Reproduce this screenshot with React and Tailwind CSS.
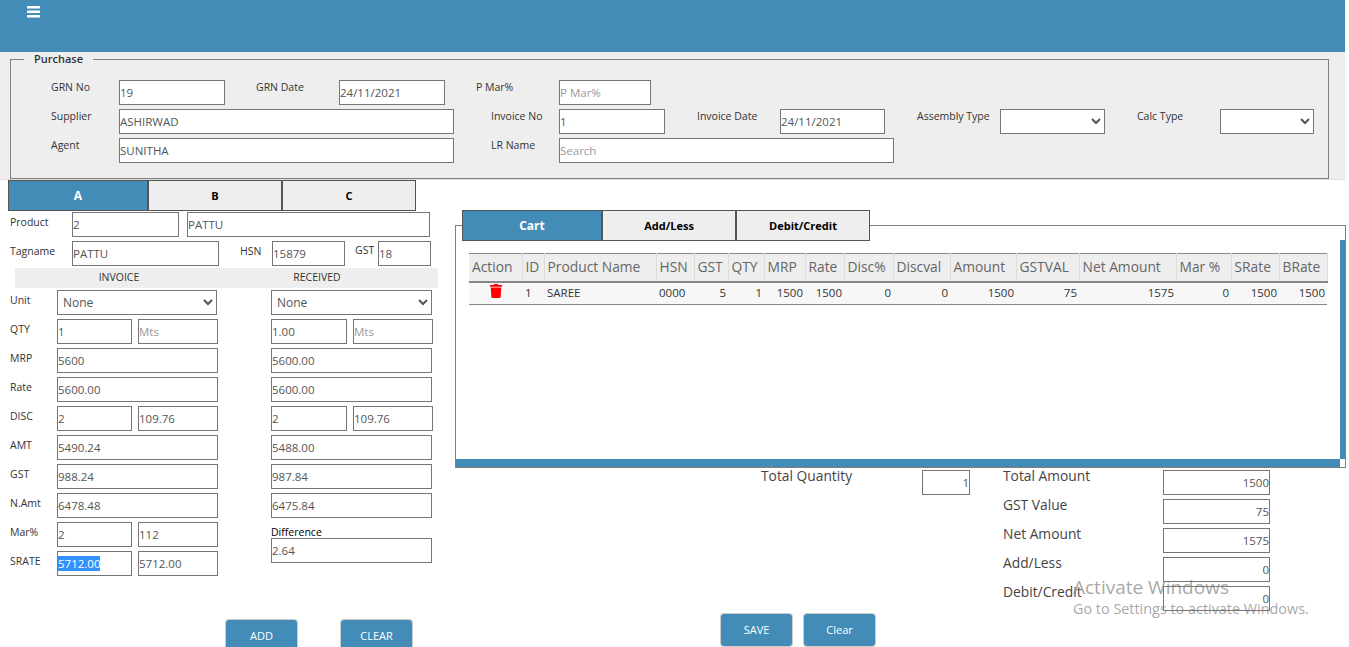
import React from "react";
import { FaTrash } from "react-icons/fa";

const fieldClass =
  "h-[25px] shrink-0 border border-[#767676] bg-white text-[11.5px] text-[#555] placeholder-[#999] outline-none";

const Field = ({ value, placeholder, className = "" }) => (
  <input readOnly defaultValue={value} placeholder={placeholder} className={`${fieldClass} ${className}`} />
);

const Picker = ({ value, className = "" }) => (
  <select defaultValue={value} className={`${fieldClass} ${className}`}>
    {value ? <option>{value}</option> : <option></option>}
  </select>
);

const Label = ({ children, className = "" }) => (
  <label className={`shrink-0 text-[10.5px] leading-[14px] text-[#333] ${className}`}>{children}</label>
);

const Tab = ({ children, active, className = "" }) => (
  <button
    className={`h-[31px] border border-[#555] font-bold ${
      active ? "bg-[#438cb8] text-[12px] text-white" : "bg-[#eee] pt-px text-[11px] text-black"
    } ${className}`}
  >
    {children}
  </button>
);

const ActionButton = ({ children }) => (
  <button className="h-[34px] w-[73px] rounded-[4px] border border-[#ccc] bg-[#438cb8] text-[11px] font-medium text-white">
    {children}
  </button>
);

const columns = [
  { name: "Action", width: "w-[53px]" },
  { name: "ID", width: "w-[22px]" },
  { name: "Product Name", width: "w-[112px]" },
  { name: "HSN", width: "w-[38px]" },
  { name: "GST", width: "w-[34px]" },
  { name: "QTY", width: "w-[36px]" },
  { name: "MRP", width: "w-[41px]" },
  { name: "Rate", width: "w-[39px]" },
  { name: "Disc%", width: "w-[49px]" },
  { name: "Discval", width: "w-[57px]" },
  { name: "Amount", width: "w-[66px]" },
  { name: "GSTVAL", width: "w-[63px]" },
  { name: "Net Amount", width: "w-[97px]" },
  { name: "Mar %", width: "w-[55px]" },
  { name: "SRate", width: "w-[48px]" },
  { name: "BRate", width: "w-[48px]" },
];

const cartValues = ["5", "1", "1500", "1500", "0", "0", "1500", "75", "1575", "0", "1500", "1500"];

const Row = ({ label, children }) => (
  <div className="flex h-[25px]">
    <Label className="w-[47px] pt-[3px]">{label}</Label>
    {children}
  </div>
);

const InvoiceColumn = () => (
  <div className="flex w-[261px] shrink-0 flex-col gap-[4px]">
    <Row label="Unit">
      <Picker value="None" className="w-[160px] pl-px text-[12px]" />
    </Row>
    <Row label="QTY">
      <Field value="1" className="w-[75px]" />
      <Field placeholder="Mts" className="ml-[6px] w-[80px]" />
    </Row>
    <Row label="MRP"><Field value="5600" className="w-[161px]" /></Row>
    <Row label="Rate"><Field value="5600.00" className="w-[161px]" /></Row>
    <Row label="DISC">
      <Field value="2" className="w-[75px]" />
      <Field value="109.76" className="ml-[6px] w-[80px]" />
    </Row>
    <Row label="AMT"><Field value="5490.24" className="w-[161px]" /></Row>
    <Row label="GST"><Field value="988.24" className="w-[161px]" /></Row>
    <Row label="N.Amt"><Field value="6478.48" className="w-[161px]" /></Row>
    <Row label="Mar%">
      <Field value="2" className="w-[75px]" />
      <Field value="112" className="ml-[6px] w-[80px]" />
    </Row>
    <Row label="SRATE">
      <div className={`${fieldClass} flex w-[75px] items-center leading-[15px]`}>
        <span className="bg-[#3390ff] text-white">5712.00</span>
      </div>
      <Field value="5712.00" className="ml-[6px] w-[80px]" />
    </Row>
  </div>
);

const ReceivedColumn = () => (
  <div className="flex flex-col gap-[4px]">
    <Picker value="None" className="w-[161px] pl-px text-[12px]" />
    <div className="flex">
      <Field value="1.00" className="w-[76px]" />
      <Field placeholder="Mts" className="ml-[6px] w-[80px]" />
    </div>
    <Field value="5600.00" className="w-[161px]" />
    <Field value="5600.00" className="w-[161px]" />
    <div className="flex">
      <Field value="2" className="w-[76px]" />
      <Field value="109.76" className="ml-[6px] w-[80px]" />
    </div>
    <Field value="5488.00" className="w-[161px]" />
    <Field value="987.84" className="w-[161px]" />
    <Field value="6475.84" className="w-[161px]" />
    <div className="flex flex-col pt-[3px]">
      <Label className="h-[13px] text-black">Difference</Label>
      <Field value="2.64" className="w-[161px]" />
    </div>
  </div>
);

const Total = ({ label, value }) => (
  <div className="flex h-[25px]">
    <span className="w-[160px] shrink-0 text-[13.8px] leading-[12px] text-[#444]">{label}</span>
    <Field value={value} className="w-[107px] text-right" />
  </div>
);

export default function App() {
  return (
    <div className="relative h-[647px] overflow-hidden bg-white font-['Open_Sans',sans-serif]">
      <header className="h-[52px] w-[1345px] bg-[#438cb8] pl-[27px] pt-[6px]">
        <svg width="13" height="12" viewBox="0 0 13 12" fill="#fff">
          <rect width="13" height="2.5" y="0" rx="0.5" />
          <rect width="13" height="2.5" y="4.5" rx="0.5" />
          <rect width="13" height="2.5" y="9" rx="0.5" />
        </svg>
      </header>

      {/* Purchase header */}
      <section className="h-[128px] w-[1345px] border-b border-[#ddd] bg-[#eee] pl-[10px]">
        <fieldset className="h-[127px] w-[1319px] border border-[#808080]">
          <legend className="ml-[13px] px-[10px] text-[11px] font-semibold leading-[14px] text-[#333]">Purchase</legend>
          <div className="flex flex-col gap-[4px] pl-[40px] pt-[14px]">
            <div className="flex">
              <Label className="w-[68px]">GRN No</Label>
              <Field value="19" className="w-[106px]" />
              <Label className="ml-[31px] w-[83px]">GRN Date</Label>
              <Field value="24/11/2021" className="w-[106px]" />
              <Label className="ml-[31px] w-[83px]">P Mar%</Label>
              <Field placeholder="P Mar%" className="w-[92px]" />
            </div>
            <div className="flex">
              <Label className="w-[68px]">Supplier</Label>
              <Field value="ASHIRWAD" className="w-[335px]" />
              <Label className="ml-[37px] w-[68px]">Invoice No</Label>
              <Field value="1" className="w-[106px]" />
              <Label className="ml-[32px] w-[83px]">Invoice Date</Label>
              <Field value="24/11/2021" className="w-[105px]" />
              <Label className="ml-[32px] w-[83px]">Assembly Type</Label>
              <Picker className="w-[105px]" />
              <Label className="ml-[32px] w-[83px]">Calc Type</Label>
              <Picker className="w-[94px]" />
            </div>
            <div className="flex">
              <Label className="w-[68px]">Agent</Label>
              <Field value="SUNITHA" className="w-[335px]" />
              <Label className="ml-[37px] w-[68px]">LR Name</Label>
              <Field placeholder="Search" className="w-[335px]" />
            </div>
          </div>
        </fieldset>
      </section>

      <div className="flex">
        {/* Item entry */}
        <div className="w-[455px] shrink-0">
          <div className="flex pl-[8px]">
            <Tab active className="w-[140px]">A</Tab>
            <Tab className="w-[134px]">B</Tab>
            <Tab className="w-[134px]">C</Tab>
          </div>
          <div className="pl-[10px] pt-px">
            <div className="flex h-[25px]">
              <Label className="w-[62px] pt-[3px]">Product</Label>
              <Field value="2" className="w-[107px]" />
              <Field value="PATTU" className="ml-[8px] w-[243px]" />
            </div>
            <div className="mt-[4px] flex h-[25px]">
              <Label className="w-[62px] pt-[3px]">Tagname</Label>
              <Field value="PATTU" className="w-[147px]" />
              <Label className="ml-[21px] w-[32px] pt-[3px]">HSN</Label>
              <Field value="15879" className="w-[73px]" />
              <Label className="ml-[10px] w-[23px] pt-[2px]">GST</Label>
              <Field value="18" className="w-[53px]" />
            </div>
            <div className="ml-[5px] mt-[2px] flex h-[20px] w-[423px] items-center bg-[#eee] pb-px text-[10.5px] text-[#333]">
              <span className="w-[208px] text-center">INVOICE</span>
              <span className="w-[188px] text-center">RECEIVED</span>
            </div>
            <div className="mt-[2px] flex">
              <InvoiceColumn />
              <ReceivedColumn />
            </div>
            <div className="ml-[215px] mt-[43px] flex gap-[42px]">
              <ActionButton>ADD</ActionButton>
              <ActionButton>CLEAR</ActionButton>
            </div>
          </div>
        </div>

        {/* Cart */}
        <div className="flex-1">
          <div className="relative z-10 -mb-[16px] mt-[30px] flex pl-[7px]">
            <Tab active className="w-[140px]">Cart</Tab>
            <Tab className="w-[134px]">Add/Less</Tab>
            <Tab className="w-[134px]">Debit/Credit</Tab>
          </div>
          <div className="flex h-[243px] w-[891px] flex-col border border-[#808080] bg-white">
            <div className="flex min-h-0 flex-1">
              <div className="flex-1 pl-[13px] pt-[27px]">
                <table className="w-[858px] table-fixed border-collapse text-[11.5px] text-[#333]">
                  <colgroup>
                    {columns.map((col) => (
                      <col key={col.name} className={col.width} />
                    ))}
                  </colgroup>
                  <thead>
                    <tr className="h-[28px] border-b-2 border-t border-[#888] bg-[#eee]">
                      {columns.map((col) => (
                        <th
                          key={col.name}
                          className="overflow-hidden whitespace-nowrap border-r border-[#ddd] pl-[3px] text-left text-[13.8px] font-normal text-[#666]"
                        >
                          {col.name}
                        </th>
                      ))}
                    </tr>
                  </thead>
                  <tbody>
                    <tr className="h-[23px] border-b border-[#888] bg-[#f7f7f7]">
                      <td className="pt-px text-center align-top">
                        <FaTrash className="mx-auto text-[14px] text-[#f00]" />
                      </td>
                      <td className="pb-[2px] pl-[3px]">1</td>
                      <td className="pb-[2px] pl-[3px]">SAREE</td>
                      <td className="pb-[2px] pl-[3px]">0000</td>
                      {cartValues.map((value, i) => (
                        <td key={i} className="pb-[2px] pr-[2px] text-right">{value}</td>
                      ))}
                    </tr>
                  </tbody>
                </table>
              </div>
              <div className="mt-[14px] w-[5px] bg-[#438cb8]"></div>
            </div>
            <div className="flex h-[8px]">
              <div className="flex-1 bg-[#438cb8]"></div>
              <div className="w-[5px] bg-white"></div>
            </div>
          </div>

          <div className="ml-[306px] mt-[2px] flex">
            <span className="w-[161px] shrink-0 text-[13.8px] leading-[12px] text-[#444]">Total Quantity</span>
            <Field value="1" className="w-[48px] text-right" />
            <div className="ml-[33px] flex flex-col gap-[4px]">
              <Total label="Total Amount" value="1500" />
              <Total label="GST Value" value="75" />
              <Total label="Net Amount" value="1575" />
              <Total label="Add/Less" value="0" />
              <Total label="Debit/Credit" value="0" />
            </div>
          </div>
          <div className="ml-[265px] mt-[2px] flex gap-[10px]">
            <ActionButton>SAVE</ActionButton>
            <ActionButton>Clear</ActionButton>
          </div>
        </div>
      </div>

      {/* Windows watermark over the page */}
      <div className="pointer-events-none absolute left-[1073px] top-[574px] text-[#808080]/70">
        <div className="text-[19px] leading-[26px]">Activate Windows</div>
        <div className="text-[14.4px] leading-[18px]">Go to Settings to activate Windows.</div>
      </div>
    </div>
  );
}
